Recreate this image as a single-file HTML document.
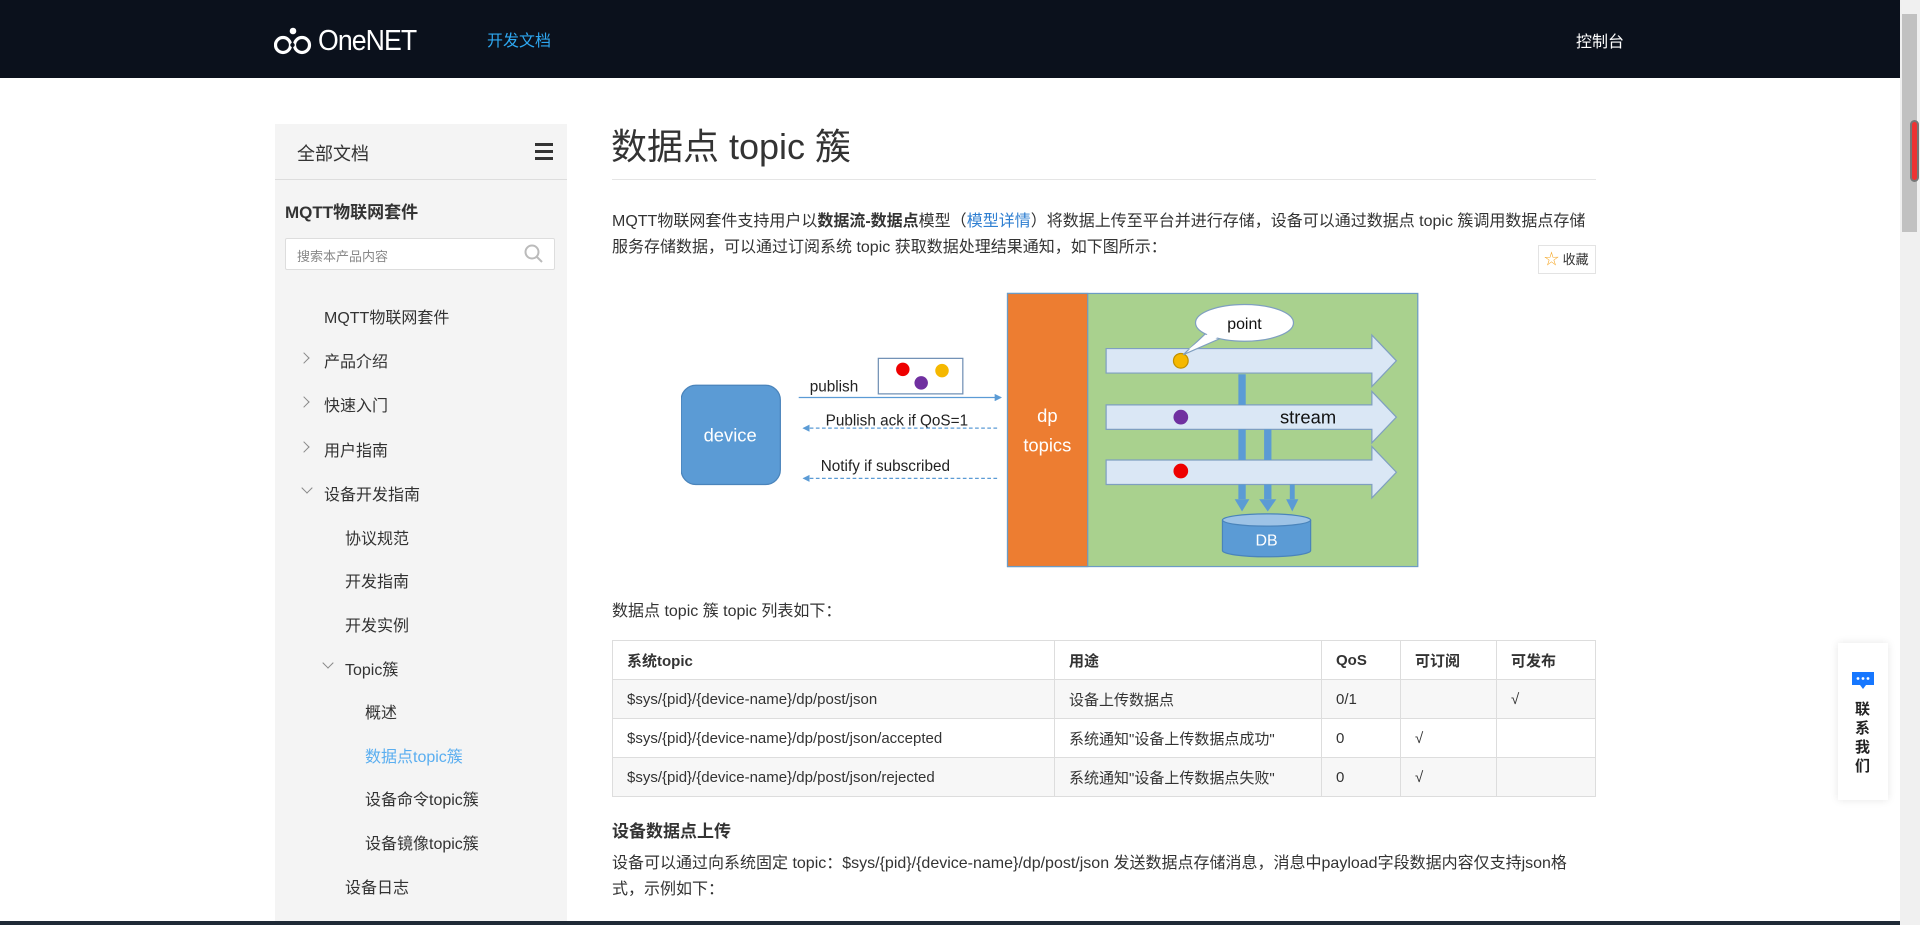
<!DOCTYPE html>
<html><head><meta charset="utf-8"><style>
*{margin:0;padding:0;box-sizing:border-box}
body{width:1920px;height:925px;overflow:hidden;background:#fff;font-family:"Liberation Sans","Noto Sans CJK SC",sans-serif;color:#333;position:relative}
.abs{position:absolute}
.hdr{left:0;top:0;width:1900px;height:78px;background:#0b111c}
.side{left:275px;top:124px;width:292px;height:801px;background:#f4f4f4}
.nav{position:absolute;font-size:16px;color:#333;white-space:nowrap}
.arr{position:absolute;width:8px;height:8px;border-right:1.5px solid #888;border-bottom:1.5px solid #888}
p.t{font-size:16px;line-height:26px}
table{border-collapse:collapse;position:absolute;left:612px;top:640px;width:984px;font-size:15px}
td,th{border:1px solid #ddd;height:39px;padding:0 14px;text-align:left;color:#333}
th{font-weight:bold}
tr.g td{background:#f7f7f7}
</style></head><body>
<div class="abs hdr"></div>
<svg class="abs" style="left:274px;top:26px" width="40" height="30" viewBox="0 0 40 30"><circle cx="9" cy="19" r="7.5" fill="none" stroke="#fff" stroke-width="3.2"/><circle cx="28" cy="19" r="7.5" fill="none" stroke="#fff" stroke-width="3.2"/><circle cx="19" cy="5" r="3.3" fill="#fff"/><circle cx="18.5" cy="19" r="2.2" fill="#0b111c"/></svg>
<div class="abs" style="left:318px;top:25px;font-size:29px;color:#fff;letter-spacing:-1px;transform:scaleX(0.92);transform-origin:left">OneNET</div>
<div class="abs" style="left:487px;top:27px;font-size:16px;color:#2ea7f0">开发文档</div>
<div class="abs" style="left:1576px;top:28px;font-size:16px;color:#fff">控制台</div>

<div class="abs side"></div>
<div class="abs" style="left:275px;top:179px;width:292px;height:1px;background:#ddd"></div>
<div class="nav" style="left:297px;top:140px;font-size:18px">全部文档</div>
<div class="abs" style="left:535px;top:143px;width:18px;height:2.5px;background:#333;box-shadow:0 7px 0 #333,0 14px 0 #333"></div>
<div class="nav" style="left:285px;top:198px;font-weight:bold;font-size:17px">MQTT物联网套件</div>
<div class="abs" style="left:285px;top:238px;width:270px;height:32px;background:#fff;border:1px solid #ddd;border-radius:2px"></div>
<div class="nav" style="left:297px;top:246px;font-size:13px;color:#888">搜索本产品内容</div>
<svg class="abs" style="left:524px;top:244px" width="20" height="20"><circle cx="8" cy="8" r="6.5" fill="none" stroke="#bbb" stroke-width="2"/><line x1="13" y1="13" x2="18" y2="18" stroke="#bbb" stroke-width="2"/></svg>

<div class="nav" style="left:324px;top:304px">MQTT物联网套件</div>
<div class="arr" style="left:300px;top:354px;transform:rotate(-45deg)"></div><div class="nav" style="left:324px;top:348px">产品介绍</div>
<div class="arr" style="left:300px;top:398px;transform:rotate(-45deg)"></div><div class="nav" style="left:324px;top:392px">快速入门</div>
<div class="arr" style="left:300px;top:443px;transform:rotate(-45deg)"></div><div class="nav" style="left:324px;top:437px">用户指南</div>
<div class="arr" style="left:303px;top:484px;transform:rotate(45deg)"></div><div class="nav" style="left:324px;top:481px">设备开发指南</div>
<div class="nav" style="left:345px;top:525px">协议规范</div>
<div class="nav" style="left:345px;top:568px">开发指南</div>
<div class="nav" style="left:345px;top:612px">开发实例</div>
<div class="arr" style="left:324px;top:659px;transform:rotate(45deg)"></div><div class="nav" style="left:345px;top:656px">Topic簇</div>
<div class="nav" style="left:365px;top:699px">概述</div>
<div class="nav" style="left:365px;top:743px;color:#5aaef0">数据点topic簇</div>
<div class="nav" style="left:365px;top:786px">设备命令topic簇</div>
<div class="nav" style="left:365px;top:830px">设备镜像topic簇</div>
<div class="nav" style="left:345px;top:874px">设备日志</div>

<div class="abs" style="left:611px;top:118px;font-size:36px;color:#333">数据点 topic 簇</div>
<div class="abs" style="left:612px;top:179px;width:984px;height:1px;background:#e5e5e5"></div>
<p class="abs t" style="left:612px;top:209px;width:986px">MQTT物联网套件支持用户以<b>数据流-数据点</b>模型（<span style="color:#2f7fd1">模型详情</span>）将数据上传至平台并进行存储，设备可以通过数据点 topic 簇调用数据点存储服务存储数据，可以通过订阅系统 topic 获取数据处理结果通知，如下图所示：</p>
<div class="abs" style="left:1538px;top:245px;width:58px;height:29px;border:1px solid #e3e3e3;font-size:13px;line-height:27px;padding-left:5px;color:#333"><span style="color:#f5a623;font-size:15px">☆</span> 收藏</div>

<svg class="abs" style="left:681px;top:291px" width="740" height="278" viewBox="556 238 604 227" font-family="Liberation Sans, sans-serif">
<defs><marker id="a" markerWidth="6" markerHeight="6" refX="5" refY="3" orient="auto"><path d="M0,0L6,3L0,6z" fill="#5b9bd5"/></marker></defs>
<rect x="822.5" y="240" width="335" height="223" fill="#a9d18e" stroke="#6c9bc4"/>
<rect x="822.5" y="240" width="65.5" height="223" fill="#ed7d31" stroke="#6c9bc4"/>
<text x="855" y="345" fill="#fff" font-size="15" text-anchor="middle">dp</text>
<text x="855" y="369" fill="#fff" font-size="15" text-anchor="middle">topics</text>
<rect x="556" y="315" width="81" height="81" rx="12" fill="#5b9bd5" stroke="#4a84bb"/>
<text x="596" y="361" fill="#fff" font-size="15" text-anchor="middle">device</text>
<rect x="717" y="293" width="69" height="29" fill="#fff" stroke="#6f8fb4"/>
<circle cx="737" cy="302" r="5.5" fill="#e00"/><circle cx="769" cy="303" r="5.5" fill="#f5b800"/><circle cx="752" cy="313" r="5.5" fill="#7030a0"/>
<text x="661" y="320" font-size="12.5" fill="#222">publish</text>
<line x1="652" y1="325" x2="817" y2="325" stroke="#5b9bd5" stroke-width="1" marker-end="url(#a)"/>
<text x="674" y="348" font-size="12.5" fill="#222">Publish ack if QoS=1</text>
<line x1="814" y1="350" x2="656" y2="350" stroke="#5b9bd5" stroke-dasharray="3,2" marker-end="url(#a)"/>
<text x="670" y="385" font-size="12.5" fill="#222">Notify if subscribed</text>
<line x1="814" y1="391" x2="656" y2="391" stroke="#5b9bd5" stroke-dasharray="3,2" marker-end="url(#a)"/>
<g fill="#dae7f5" stroke="#7f9fc0">
<path d="M903,285H1120V274L1140,295L1120,316V305H903Z"/>
<path d="M903,331H1120V320L1140,341L1120,362V351H903Z"/>
<path d="M903,376H1120V365L1140,386L1120,407V396H903Z"/>
</g>
<g fill="#5b9bd5"><rect x="1011" y="306" width="6" height="25"/><rect x="1011" y="351" width="6" height="25"/><rect x="1011" y="396" width="6" height="12"/><path d="M1008,408H1020L1014,418Z"/>
<rect x="1032" y="351" width="6" height="25"/><rect x="1032" y="396" width="6" height="12"/><path d="M1028,408H1042L1035,418Z"/>
<rect x="1053" y="396" width="4" height="12"/><path d="M1050,408H1060L1055,418Z"/></g>
<path d="M998,425V450A36,5 0 0 0 1070,450V425" fill="#5b9bd5" stroke="#4a84bb"/>
<ellipse cx="1034" cy="425" rx="36" ry="5" fill="#9dc3e6" stroke="#4a84bb"/>
<text x="1034" y="446" fill="#fff" font-size="13" text-anchor="middle">DB</text>
<circle cx="964" cy="295" r="6" fill="#f5b800" stroke="#c09000"/><circle cx="964" cy="341" r="6" fill="#7030a0"/><circle cx="964" cy="385" r="6" fill="#e00"/>
<path d="M966,290L985,272L998,276Z" fill="#fff" stroke="#7f9fc0"/>
<ellipse cx="1016" cy="264" rx="40" ry="15" fill="#fff" stroke="#7f9fc0"/>
<path d="M986,273L970,286L994,276" fill="#fff"/>
<text x="1016" y="269" font-size="13" text-anchor="middle" fill="#111">point</text>
<text x="1045" y="346" font-size="15" fill="#111">stream</text>
</svg>

<p class="abs t" style="left:612px;top:599px">数据点 topic 簇 topic 列表如下：</p>
<table>
<tr><th style="width:442px">系统topic</th><th style="width:267px">用途</th><th style="width:79px">QoS</th><th style="width:96px">可订阅</th><th>可发布</th></tr>
<tr class="g"><td>$sys/{pid}/{device-name}/dp/post/json</td><td>设备上传数据点</td><td>0/1</td><td></td><td>√</td></tr>
<tr><td>$sys/{pid}/{device-name}/dp/post/json/accepted</td><td>系统通知"设备上传数据点成功"</td><td>0</td><td>√</td><td></td></tr>
<tr class="g"><td>$sys/{pid}/{device-name}/dp/post/json/rejected</td><td>系统通知"设备上传数据点失败"</td><td>0</td><td>√</td><td></td></tr>
</table>
<div class="abs" style="left:612px;top:817px;font-size:17px;font-weight:bold">设备数据点上传</div>
<p class="abs t" style="left:612px;top:851px;width:986px">设备可以通过向系统固定 topic：$sys/{pid}/{device-name}/dp/post/json 发送数据点存储消息，消息中payload字段数据内容仅支持json格式，示例如下：</p>

<div class="abs" style="left:1838px;top:643px;width:50px;height:157px;background:#fff;box-shadow:0 0 8px rgba(0,0,0,.1)"></div>
<svg class="abs" style="left:1852px;top:672px" width="22" height="18"><path d="M0,0H22V13H14L11,17L8,13H0Z" fill="#1677ff"/><circle cx="6" cy="6.5" r="1.4" fill="#fff"/><circle cx="11" cy="6.5" r="1.4" fill="#fff"/><circle cx="16" cy="6.5" r="1.4" fill="#fff"/></svg>
<div class="abs" style="left:1855px;top:700px;width:16px;font-size:15px;font-weight:bold;line-height:19px;color:#222">联系我们</div>

<div class="abs" style="left:1900px;top:0;width:20px;height:925px;background:#f0f0f0"></div>
<div class="abs" style="left:1902px;top:14px;width:15px;height:218px;background:#c1c1c1"></div>
<div class="abs" style="left:1910px;top:120px;width:9px;height:62px;border:2px solid #777;border-radius:5px;background:#e33"></div>
<div class="abs" style="left:0;top:921px;width:1900px;height:4px;background:#1f2a36"></div>
</body></html>
